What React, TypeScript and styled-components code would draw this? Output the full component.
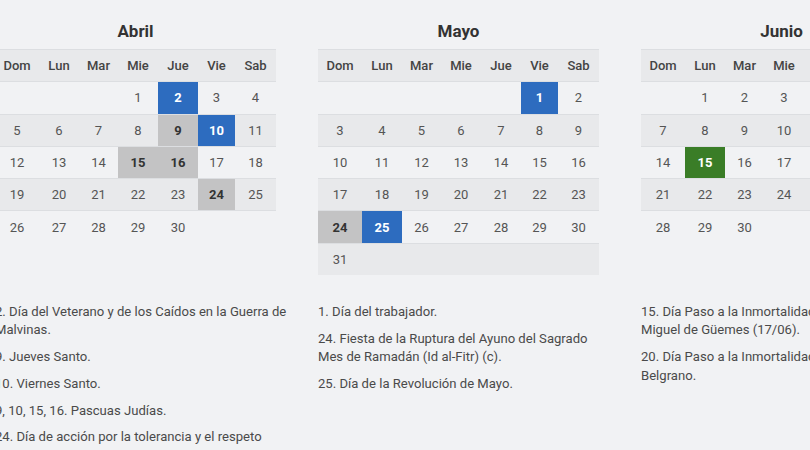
import React from "react";
import styled, { createGlobalStyle } from "styled-components";

const GlobalStyle = createGlobalStyle`
  html, body {
    margin: 0;
    padding: 0;
    background: #f1f2f4;
    font-family: Roboto, "Liberation Sans", Arial, sans-serif;
    overflow: hidden;
  }
`;

type Tone = "blue" | "gray" | "green" | undefined;

const Page = styled.div`
  display: grid;
  grid-template-columns: repeat(3, 296px);
  column-gap: 27px;
  row-gap: 28px;
  margin-left: -5px;
  padding-top: 19px;
  width: 950px;
`;

const Month = styled.section`
  display: flex;
  flex-direction: column;
  width: 281px;
`;

const Title = styled.h3`
  margin: 0 0 6px;
  height: 24px;
  line-height: 24px;
  font-size: 17px;
  font-weight: 700;
  color: #333;
  text-align: center;
`;

const Row = styled.div<{ $striped?: boolean }>`
  display: grid;
  grid-template-columns: 44px 40px 39px 40px 40px 37px 41px;
  background: ${(p) => (p.$striped ? "#e8e9eb" : "transparent")};
`;

const toneBg: Record<string, string> = {
  blue: "#2d6cbf",
  gray: "#c3c3c4",
  green: "#3a7d27",
};

const Cell = styled.div<{ $tone?: Tone; $head?: boolean }>`
  height: 31.3px;
  border-top: 1px solid #dcdee1;
  display: flex;
  align-items: center;
  justify-content: center;
  font-size: 13px;
  font-weight: ${(p) => (p.$head ? 500 : p.$tone ? 700 : 400)};
  color: ${(p) =>
    p.$tone === "blue" || p.$tone === "green"
      ? "#ffffff"
      : p.$tone === "gray"
      ? "#333"
      : p.$head
      ? "#444"
      : "#555"};
  background: ${(p) => (p.$tone ? toneBg[p.$tone] : "transparent")};
`;

const Notes = styled.div`
  display: flex;
  flex-direction: column;
  width: 296px;
`;

const Note = styled.p`
  margin: 0 0 8.3px;
  font-size: 13.1px;
  line-height: 18.4px;
  color: #4a4a4a;
`;

const DAYS = ["Dom", "Lun", "Mar", "Mie", "Jue", "Vie", "Sab"];

type MonthData = {
  name: string;
  start: number;
  length: number;
  marks: Record<number, Tone>;
  notes: string[];
};

const MONTHS: MonthData[] = [
  {
    name: "Abril",
    start: 3,
    length: 30,
    marks: { 2: "blue", 9: "gray", 10: "blue", 15: "gray", 16: "gray", 24: "gray" },
    notes: [
      "2. Día del Veterano y de los Caídos en la Guerra de Malvinas.",
      "9. Jueves Santo.",
      "10. Viernes Santo.",
      "9, 10, 15, 16. Pascuas Judías.",
      "24. Día de acción por la tolerancia y el respeto entre los pueblos.",
    ],
  },
  {
    name: "Mayo",
    start: 5,
    length: 31,
    marks: { 1: "blue", 24: "gray", 25: "blue" },
    notes: [
      "1. Día del trabajador.",
      "24. Fiesta de la Ruptura del Ayuno del Sagrado Mes de Ramadán (Id al-Fitr) (c).",
      "25. Día de la Revolución de Mayo.",
    ],
  },
  {
    name: "Junio",
    start: 1,
    length: 30,
    marks: { 15: "green", 20: "blue" },
    notes: [
      "15. Día Paso a la Inmortalidad del General Martín Miguel de Güemes (17/06).",
      "20. Día Paso a la Inmortalidad del General Manuel Belgrano.",
    ],
  },
];

function weeks(m: MonthData): (number | null)[][] {
  const cells: (number | null)[] = [];
  for (let i = 0; i < m.start; i++) cells.push(null);
  for (let d = 1; d <= m.length; d++) cells.push(d);
  while (cells.length % 7 !== 0) cells.push(null);
  const out: (number | null)[][] = [];
  for (let i = 0; i < cells.length; i += 7) out.push(cells.slice(i, i + 7));
  return out;
}

const Calendar: React.FC<{ m: MonthData }> = ({ m }) => (
  <Month>
    <Title>{m.name}</Title>
    <Row $striped>
      {DAYS.map((d) => (
        <Cell key={d} $head>
          {d}
        </Cell>
      ))}
    </Row>
    {weeks(m).map((w, i) => (
      <Row key={i} $striped={i % 2 === 1}>
        {w.map((d, j) => (
          <Cell key={j} $tone={d ? m.marks[d] : undefined}>
            {d ?? ""}
          </Cell>
        ))}
      </Row>
    ))}
  </Month>
);

export default function App() {
  return (
    <>
      <GlobalStyle />
      <Page>
        {MONTHS.map((m) => (
          <Calendar key={m.name} m={m} />
        ))}
        {MONTHS.map((m) => (
          <Notes key={m.name + "-n"}>
            {m.notes.map((n) => (
              <Note key={n}>{n}</Note>
            ))}
          </Notes>
        ))}
      </Page>
    </>
  );
}
